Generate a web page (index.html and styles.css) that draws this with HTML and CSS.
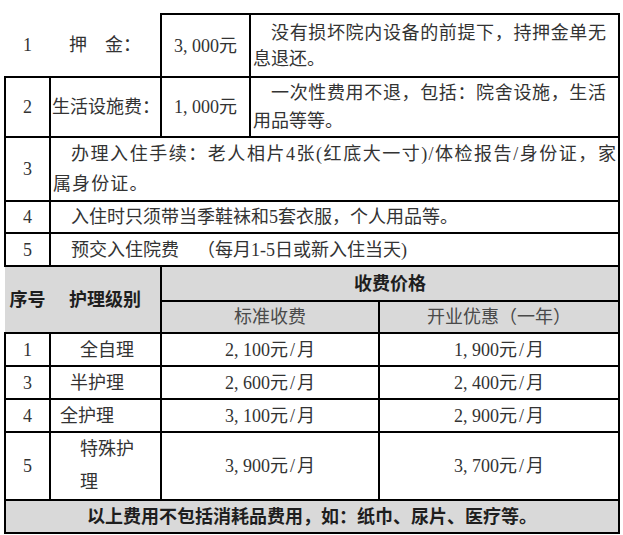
FILE: index.html
```html
<!DOCTYPE html>
<html lang="zh-CN">
<head>
<meta charset="utf-8">
<title>收费标准</title>
<link rel="stylesheet" href="styles.css">
</head>
<body>
<div class="page">
  <table class="info">
    <colgroup><col class="c1"><col class="c2"><col class="c3"><col class="c4"></colgroup>
    <tr class="r1">
      <td class="nb nb-num num">1</td>
      <td class="nb nb-lbl lbl">押　金：</td>
      <td class="amt">3<span class="hw cm">,</span>000元</td>
      <td class="desc d12">没有损坏院内设备的前提下，持押金单无息退还。</td>
    </tr>
    <tr class="r2">
      <td class="num">2</td>
      <td class="lbl">生活设施费：</td>
      <td class="amt">1<span class="hw cm">,</span>000元</td>
      <td class="desc d12">一次性费用不退，包括：院舍设施，生活用品等等。</td>
    </tr>
    <tr class="r3">
      <td class="num">3</td>
      <td class="desc d3" colspan="3">办理入住手续：老人相片4张(红底大一寸)/体检报告/身份证，家属身份证。</td>
    </tr>
    <tr class="r4">
      <td class="num">4</td>
      <td class="desc" colspan="3">入住时只须带当季鞋袜和5套衣服，个人用品等。</td>
    </tr>
    <tr class="r5">
      <td class="num">5</td>
      <td class="desc" colspan="3">预交入住院费　（每月1-5日或新入住当天)</td>
    </tr>
  </table>
  <table class="fees">
    <colgroup><col class="c1"><col class="c2"><col class="f3"><col class="f4"></colgroup>
    <tr class="h1">
      <th class="hn" rowspan="2">序号</th>
      <th class="hl" rowspan="2">护理级别</th>
      <th class="ht" colspan="2">收费价格</th>
    </tr>
    <tr class="h2">
      <th class="hs">标准收费</th>
      <th class="hs">开业优惠（一年）</th>
    </tr>
    <tr class="dr">
      <td class="num">1</td>
      <td class="lv lv1">全自理</td>
      <td class="pr">2<span class="hw cm">,</span>100元<span class="hw">/</span>月</td>
      <td class="pr">1<span class="hw cm">,</span>900元<span class="hw">/</span>月</td>
    </tr>
    <tr class="dr">
      <td class="num">3</td>
      <td class="lv lv2">半护理</td>
      <td class="pr">2<span class="hw cm">,</span>600元<span class="hw">/</span>月</td>
      <td class="pr">2<span class="hw cm">,</span>400元<span class="hw">/</span>月</td>
    </tr>
    <tr class="dr">
      <td class="num">4</td>
      <td class="lv lv3">全护理</td>
      <td class="pr">3<span class="hw cm">,</span>100元<span class="hw">/</span>月</td>
      <td class="pr">2<span class="hw cm">,</span>900元<span class="hw">/</span>月</td>
    </tr>
    <tr class="dr2">
      <td class="num">5</td>
      <td class="lv lv4">特殊护理</td>
      <td class="pr">3<span class="hw cm">,</span>900元<span class="hw">/</span>月</td>
      <td class="pr">3<span class="hw cm">,</span>700元<span class="hw">/</span>月</td>
    </tr>
    <tr class="ft">
      <td class="foot" colspan="4">以上费用不包括消耗品费用，如：纸巾、尿片、医疗等。</td>
    </tr>
  </table>
</div>
</body>
</html>
```

FILE: styles.css
```css
body {
  margin: 0;
  background: #fff;
  font-family: "Liberation Serif", "Noto Sans CJK SC", serif;
  font-size: 18px;
  color: #333;
  text-spacing-trim: space-all;
}

.page {
  padding: 13px 0 0 4px;
}

table {
  border-collapse: collapse;
  table-layout: fixed;
  width: 614px;
}

td, th {
  border: 2px solid #000;
  padding: 0 2px;
  font-weight: normal;
  line-height: 28px;
  vertical-align: middle;
}

.c1 { width: 45px; }
.c2 { width: 111px; }
.c3 { width: 89px; }
.c4 { width: 369px; }
.f3 { width: 218px; }
.f4 { width: 240px; }

.r1 { height: 63px; }
.r2 { height: 60px; }
.r3 { height: 64px; }
.r4 { height: 32px; }
.r5 { height: 33px; }

.r1 td { line-height: 26px; }
.r3 td { line-height: 30px; }

.nb {
  border-top: none;
  border-left: none;
}
.nb-num { border-right: hidden; border-left: hidden; }
.nb-lbl { border-left: hidden; }

.num { text-align: center; }
.lbl { text-align: center; padding: 0 1px; white-space: nowrap; }
.amt { text-align: center; }

.hw {
  display: inline-block;
  width: 9px;
  text-align: center;
  text-indent: 0;
}
.cm { text-align: left; }

.desc {
  text-align: justify;
  text-indent: 1em;
}
.d12 { padding: 0 12px 0 2px; }
.d3 { padding: 0 1px 0 2px; letter-spacing: 1.1px; }

.fees tr:first-child th { border-top: none; }

.h1 { height: 34px; }
.h2 { height: 32px; }
.dr { height: 33px; }
.dr2 { height: 63px; }
.ft { height: 33px; }

th {
  background: #d9d9d9;
  color: #1e1e1e;
}
.hn { border-left: none; border-right: none; font-weight: bold; }
.hl { border-left: none; font-weight: bold; }
.ht { font-weight: bold; }
.hs { color: #4a4a4a; }

.lv { text-align: left; }
.lv1 { padding-left: 29px; }
.lv2 { padding-left: 19px; }
.lv3 { padding-left: 9px; }
.lv4 { padding: 0 24px 0 29px; line-height: 33px; }

.pr { text-align: center; }

.foot {
  background: #d9d9d9;
  text-align: center;
  font-weight: bold;
  color: #1e1e1e;
}
```
